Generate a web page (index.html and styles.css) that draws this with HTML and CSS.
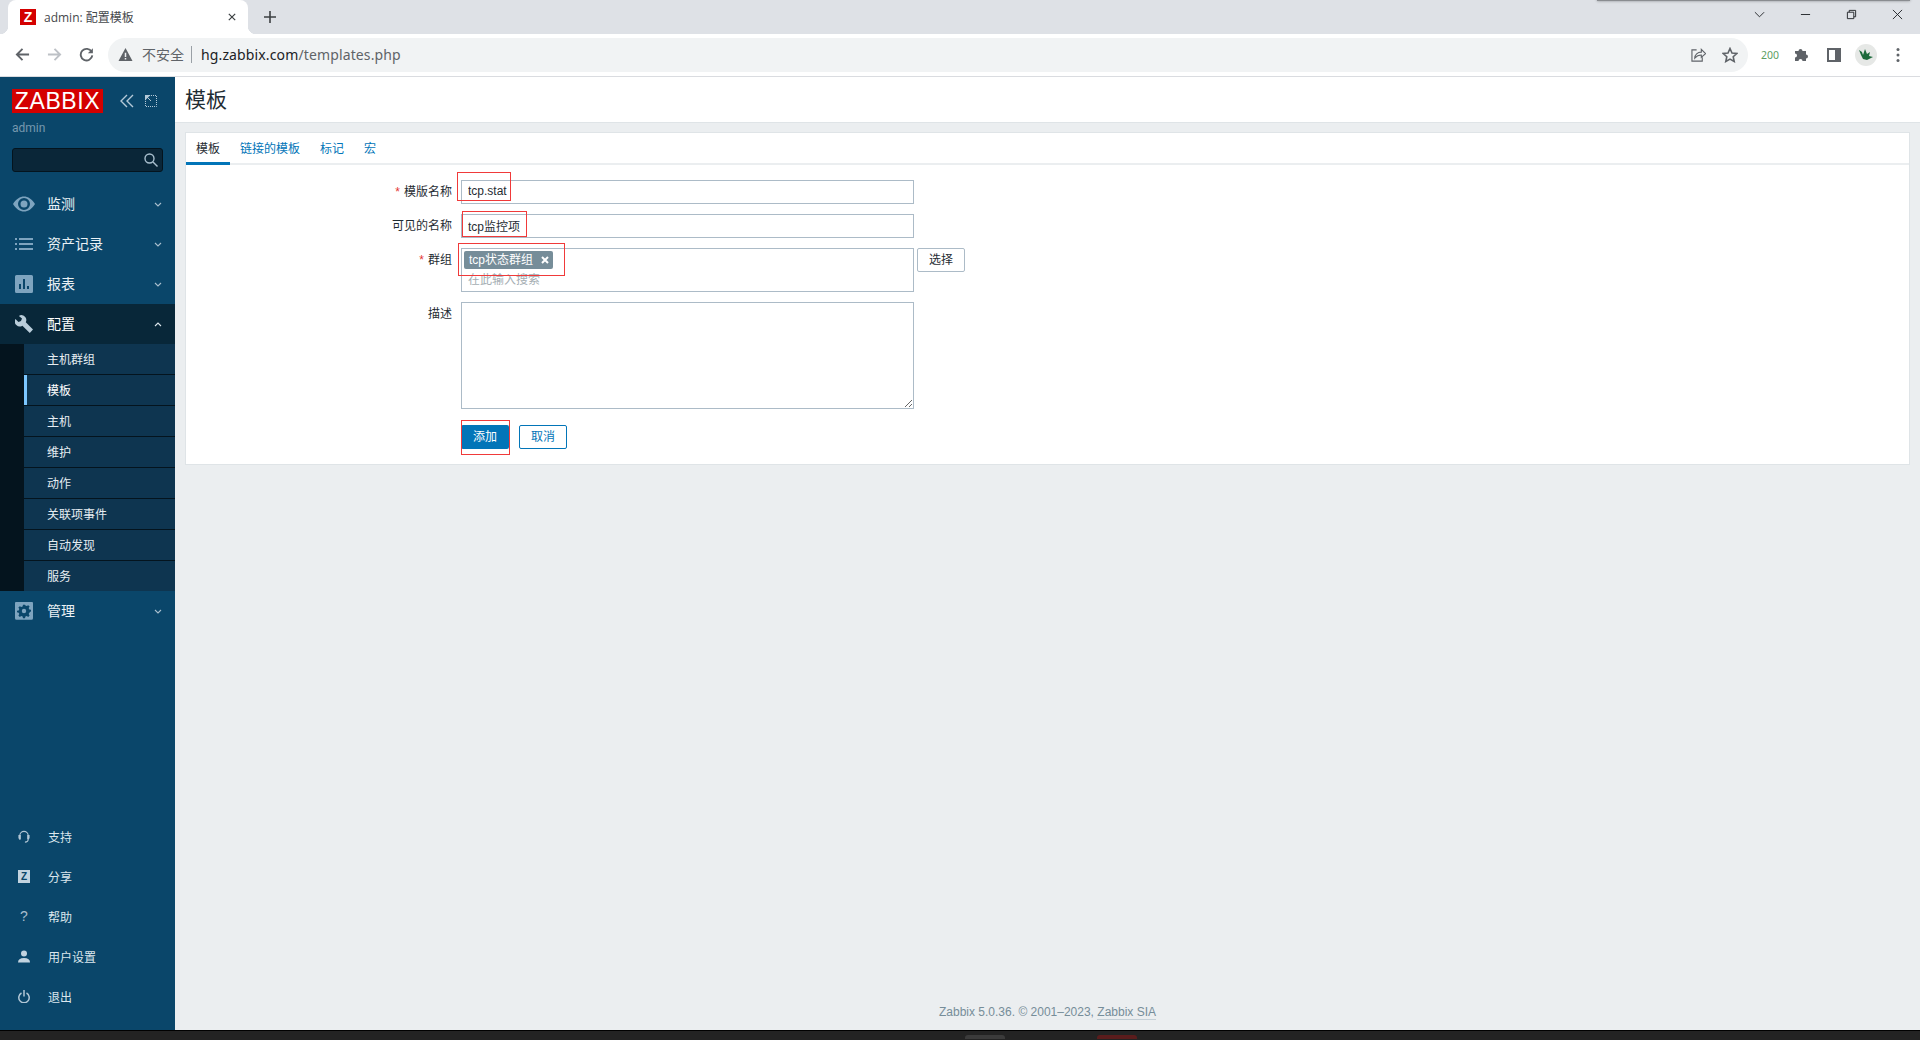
FILE: index.html
```html
<!DOCTYPE html>
<html lang="zh-CN">
<head>
<meta charset="utf-8">
<title>admin: 配置模板</title>
<link rel="stylesheet" href="styles.css">
</head>
<body>
<div class="tabstrip">
  <div class="browser-tab">
    <span class="favicon">Z</span>
    <span class="tab-title">admin: 配置模板</span>
    <svg class="tab-close" viewBox="0 0 10 10"><path d="M1 1l8 8M9 1l-8 8"/></svg>
  </div>
  <svg class="new-tab" viewBox="0 0 12 12"><path d="M6 0v12M0 6h12"/></svg>
  <div class="strip-shadow"></div>
  <div class="window-controls">
    <span class="win-btn"><svg viewBox="0 0 12 12"><path d="M1 3.500l5 5 5-5"/></svg></span>
    <span class="win-btn"><svg viewBox="0 0 12 12"><path d="M1 6h10"/></svg></span>
    <span class="win-btn"><svg viewBox="0 0 12 12"><path d="M1.500 3.500h7v7h-7zM3.500 3.500v-2h7v7h-2"/></svg></span>
    <span class="win-btn"><svg viewBox="0 0 12 12"><path d="M1 1l10 10M11 1L1 11"/></svg></span>
  </div>
</div>

<div class="toolbar">
  <span class="tool-btn"><svg viewBox="0 0 16 16" class="nav-ic"><path d="M15 8H2M8 2L2 8l6 6"/></svg></span>
  <span class="tool-btn"><svg viewBox="0 0 16 16" class="nav-ic nav-off"><path d="M1 8h13M8 2l6 6-6 6"/></svg></span>
  <span class="tool-btn"><svg viewBox="0 0 16 16" class="nav-ic"><path d="M13.500 5.200A6.200 6.200 0 1 0 14.200 9"/><path class="solid" d="M14.800 1.200v5.400H9.400z"/></svg></span>
  <div class="address">
    <svg class="warn" viewBox="0 0 16 16"><path d="M8 1L.5 15h15zM7.200 6h1.600v4.600H7.200zM7.200 11.600h1.600v1.600H7.200z" fill-rule="evenodd"/></svg>
    <span class="insecure">不安全</span>
    <span class="addr-sep"></span>
    <span class="url"><span class="url-host">hg.zabbix.com</span>/templates.php</span>
    <span class="addr-icons">
      <span class="tool-btn"><svg viewBox="0 0 16 16" class="line-ic"><path d="M6 3H1v12h11v-4"/><path d="M4 12c0-4 3-6.500 7-6.500V2.500L15.500 7 11 11V8.500c-3 0-5 1-7 3.500z"/></svg></span>
      <span class="tool-btn"><svg viewBox="0 0 16 16" class="line-ic star"><path d="M8 1.500l2 4.500 4.800.5-3.600 3.200 1 4.800L8 12.100l-4.200 2.400 1-4.800L1.200 6.500 6 6z"/></svg></span>
    </span>
  </div>
  <span class="tool-btn ext-count">200</span>
  <span class="tool-btn"><svg viewBox="0 0 16 16" class="solid-ic"><path d="M1 5h3.500a2 2 0 1 1 4 0H12v3.500a2 2 0 1 1 0 4V15H8.500a2 2 0 1 0-4 0H1v-3.500a2 2 0 1 0 0-4z" transform="translate(0 -1)"/></svg></span>
  <span class="tool-btn"><svg viewBox="0 0 16 16" class="solid-ic"><path d="M1 1h14v14H1zM3 3v10h6V3z" fill-rule="evenodd"/></svg></span>
  <span class="tool-btn"><svg viewBox="0 0 22 22" class="avatar"><circle cx="11" cy="11" r="11" fill="#e6e8e6"/><path d="M4 6l3 2 1 3 2-6 2 5 3-2-1 4 4 1-4 2-2 1-4-1-2-4z" fill="#1d6b3c"/></svg></span>
  <span class="tool-btn"><svg viewBox="0 0 4 16" class="dots"><circle cx="2" cy="2.500" r="1.500"/><circle cx="2" cy="8" r="1.500"/><circle cx="2" cy="13.500" r="1.500"/></svg></span>
</div>

<div class="app">
  <aside class="sidebar">
    <div class="brand">
      <span class="logo">ZABBIX</span>
      <svg class="collapse-ic" viewBox="0 0 14 14"><path d="M7 1L1 7l6 6M13 1L7 7l6 6"/></svg>
      <svg class="expand-ic" viewBox="0 0 12 12"><path class="dash" d="M.5 4v7.500H11.500V.5H4"/><path class="fill" d="M0 0h5.500L0 5.500z"/><path class="thin" d="M1 1l5 5"/></svg>
    </div>
    <div class="server-user">admin</div>
    <div class="search">
      <svg viewBox="0 0 14 14"><circle cx="5.500" cy="5.500" r="4.500"/><path d="M9 9l4.500 4.500"/></svg>
    </div>
    <nav class="menu">
      <a class="menu-item">
        <svg class="menu-ic eye-ic" viewBox="0 0 22 16"><path d="M0 8C3 3 7 .5 11 .5S19 3 22 8c-3 5-7 7.500-11 7.500S3 13 0 8zm11-6a6 6 0 1 0 0 12 6 6 0 0 0 0-12zm0 2.500a3.500 3.500 0 1 1 0 7 3.500 3.500 0 0 1 0-7z" fill-rule="evenodd"/></svg>
        <span>监测</span>
        <svg class="chev" viewBox="0 0 8 5"><path d="M1 1l3 3 3-3"/></svg>
      </a>
      <a class="menu-item">
        <svg class="menu-ic" viewBox="0 0 18 12"><path d="M0 0h2v2H0zM4 0h14v2H4zM0 5h2v2H0zM4 5h14v2H4zM0 10h2v2H0zM4 10h14v2H4z"/></svg>
        <span>资产记录</span>
        <svg class="chev" viewBox="0 0 8 5"><path d="M1 1l3 3 3-3"/></svg>
      </a>
      <a class="menu-item">
        <svg class="menu-ic" viewBox="0 0 18 18"><path d="M1.500 0h15A1.500 1.500 0 0 1 18 1.500v15a1.500 1.500 0 0 1-1.500 1.500h-15A1.500 1.500 0 0 1 0 16.500v-15A1.500 1.500 0 0 1 1.500 0zM4 9v5h2V9zm4-5v10h2V4zm4 7v3h2v-3z" fill-rule="evenodd"/></svg>
        <span>报表</span>
        <svg class="chev" viewBox="0 0 8 5"><path d="M1 1l3 3 3-3"/></svg>
      </a>
      <a class="menu-item is-open">
        <svg class="menu-ic" viewBox="0 0 18 18"><path d="M6.500 0a5 5 0 0 1 4.300 7.200L18 14.400 14.800 18l-7.400-7.300A5 5 0 0 1 .4 4l3.100 3.100L6 6 7 3.500 3.900.9A5 5 0 0 1 6.500 0z"/></svg>
        <span>配置</span>
        <svg class="chev" viewBox="0 0 8 5"><path d="M1 4l3-3 3 3"/></svg>
      </a>
      <div class="submenu">
        <a class="sub-item">主机群组</a>
        <a class="sub-item is-current">模板</a>
        <a class="sub-item">主机</a>
        <a class="sub-item">维护</a>
        <a class="sub-item">动作</a>
        <a class="sub-item">关联项事件</a>
        <a class="sub-item">自动发现</a>
        <a class="sub-item">服务</a>
      </div>
      <a class="menu-item">
        <svg class="menu-ic" viewBox="0 0 18 18"><path d="M1.500 0h15A1.500 1.500 0 0 1 18 1.500v15a1.500 1.500 0 0 1-1.500 1.500h-15A1.500 1.500 0 0 1 0 16.500v-15A1.500 1.500 0 0 1 1.500 0zM8 3l-.4 1.700-1.300.6-1.500-.9-1.400 1.400.9 1.500-.6 1.300L2 9l0 1.500 1.700.4.600 1.300-.9 1.500 1.400 1.400 1.500-.9 1.300.6.400 1.700H10l.4-1.700 1.300-.6 1.500.9 1.400-1.400-.9-1.500.6-1.300L16 9.500 16 8l-1.700-.4-.6-1.300.9-1.500-1.400-1.400-1.500.9-1.300-.6L10 3zm1 4a2.200 2.200 0 1 1 0 4.400A2.200 2.200 0 0 1 9 7z" fill-rule="evenodd" transform="translate(0 -.2)"/></svg>
        <span>管理</span>
        <svg class="chev" viewBox="0 0 8 5"><path d="M1 1l3 3 3-3"/></svg>
      </a>
    </nav>
    <nav class="user-menu">
      <a class="user-item">
        <svg class="user-ic" viewBox="0 0 12 14"><path d="M1.500 10.500V6a4.500 4.500 0 0 1 9 0v4.500M10.500 10c0 2-1.500 3-3.500 3"/><path class="solid" d="M0 6h2.500v4.500H1l-1-1zM12 6H9.500v4.500H11l1-1z" transform="translate(0 -.5)"/></svg>
        <span>支持</span>
      </a>
      <a class="user-item">
        <span class="share-z">Z</span>
        <span>分享</span>
      </a>
      <a class="user-item">
        <span class="help-q">?</span>
        <span>帮助</span>
      </a>
      <a class="user-item">
        <svg class="user-ic filled" viewBox="0 0 12 12"><circle cx="6" cy="3" r="3"/><path d="M0 12c0-3 2-4.500 6-4.500s6 1.500 6 4.500z"/></svg>
        <span>用户设置</span>
      </a>
      <a class="user-item">
        <svg class="user-ic" viewBox="0 0 12 13"><path d="M3.500 3a5.200 5.200 0 1 0 5 0M6 0v6.500" stroke-width="1.500"/></svg>
        <span>退出</span>
      </a>
    </nav>
  </aside>

  <main class="main">
    <header class="page-header"><h1>模板</h1></header>
    <section class="card">
      <div class="tabs">
        <a class="tab is-active">模板</a>
        <a class="tab">链接的模板</a>
        <a class="tab">标记</a>
        <a class="tab">宏</a>
      </div>
      <form class="form">
        <div class="form-row">
          <label class="form-label"><span class="req">*</span>模版名称</label>
          <div class="form-field">
            <input class="text-input" type="text" value="tcp.stat">
            <span class="mark mark-name"></span>
          </div>
        </div>
        <div class="form-row">
          <label class="form-label">可见的名称</label>
          <div class="form-field">
            <input class="text-input" type="text" value="tcp监控项">
            <span class="mark mark-visible"></span>
          </div>
        </div>
        <div class="form-row">
          <label class="form-label"><span class="req">*</span>群组</label>
          <div class="form-field field-group">
            <div class="multiselect">
              <span class="chip">tcp状态群组<svg viewBox="0 0 8 8"><path d="M1 1l6 6M7 1L1 7"/></svg></span>
              <span class="ms-placeholder">在此输入搜索</span>
            </div>
            <button class="btn-alt btn-select" type="button">选择</button>
            <span class="mark mark-group"></span>
          </div>
        </div>
        <div class="form-row">
          <label class="form-label">描述</label>
          <div class="form-field">
            <textarea class="text-area"></textarea>
          </div>
        </div>
        <div class="form-row form-actions">
          <span class="form-label"></span>
          <div class="form-field field-group">
            <button class="btn-primary" type="button">添加</button>
            <button class="btn-alt btn-cancel" type="button">取消</button>
            <span class="mark mark-add"></span>
          </div>
        </div>
      </form>
    </section>
    <footer class="page-footer">Zabbix 5.0.36. © 2001–2023, <a class="footer-link">Zabbix SIA</a></footer>
  </main>
</div>

<div class="taskbar">
  <span class="task task-gray"></span>
  <span class="task task-red"></span>
</div>
</body>
</html>
```

FILE: styles.css
```css
* { box-sizing: border-box; }
html, body { height: 100%; }
body {
  margin: 0;
  display: flex;
  flex-direction: column;
  height: 1040px;
  overflow: hidden;
  font-family: "Liberation Sans", "Noto Sans CJK SC", sans-serif;
  font-size: 12px;
  color: #1f2c33;
  background: #ebeef0;
}
a { text-decoration: none; color: inherit; }

/* browser chrome */
.tabstrip {
  position: relative;
  display: flex;
  align-items: flex-start;
  height: 34px;
  flex: none;
  background: #dee1e6;
  padding-left: 8px;
}
.browser-tab {
  position: relative;
  display: flex;
  align-items: center;
  width: 240px;
  height: 34px;
  background: #fff;
  border-radius: 8px 8px 0 0;
  padding: 0 10px 0 12px;
}
.browser-tab::before,
.browser-tab::after {
  content: "";
  position: absolute;
  bottom: 0;
  width: 8px;
  height: 8px;
}
.browser-tab::before { left: -8px; background: radial-gradient(circle at 0 0, transparent 8px, #fff 8.500px); }
.browser-tab::after { right: -8px; background: radial-gradient(circle at 100% 0, transparent 8px, #fff 8.500px); }
.favicon {
  width: 16px;
  height: 16px;
  background: #d40000;
  color: #fff;
  font: bold 14px/16px "Liberation Sans", sans-serif;
  text-align: center;
  flex: none;
}
.tab-title {
  margin-left: 8px;
  flex: 1;
  font-size: 12px;
  line-height: 16px;
  padding-top: 2px;
  color: #45484c;
  font-family: "Open Sans", "Noto Sans CJK SC", sans-serif;
}
.tab-close { width: 8px; height: 8px; fill: none; stroke: #3c4043; stroke-width: 1.500; margin-right: 2px; }
.new-tab { width: 12px; height: 12px; margin: 11px 0 0 16px; fill: none; stroke: #3c4043; stroke-width: 1.600; }
.strip-shadow {
  position: absolute;
  left: 1597px;
  top: -2px;
  width: 313px;
  height: 3px;
  background: #8a8d91;
  box-shadow: 0 0 3px #8a8d91;
}
.window-controls { display: flex; margin-left: auto; height: 28px; }
.win-btn { width: 46px; height: 28px; display: flex; align-items: center; justify-content: center; }
.win-btn svg { width: 11px; height: 11px; fill: none; stroke: #1f2226; stroke-width: 1; }

.toolbar {
  display: flex;
  align-items: center;
  height: 43px;
  flex: none;
  padding: 0 6px 1px;
  background: #fff;
  border-bottom: 1px solid #dadce0;
}
.tool-btn {
  width: 32px;
  height: 32px;
  flex: none;
  display: flex;
  align-items: center;
  justify-content: center;
}
.nav-ic { width: 15px; height: 15px; fill: none; stroke: #5f6368; stroke-width: 2; }
.nav-ic .solid { fill: #5f6368; stroke: none; }
.nav-off { stroke: #bdc1c6; }
.address {
  flex: 1;
  height: 34px;
  margin: 0 6px;
  padding: 0 2px 0 10px;
  display: flex;
  align-items: center;
  background: #f1f3f4;
  border-radius: 17px;
}
.warn { width: 15px; height: 15px; fill: #5f6368; }
.insecure {
  margin-left: 9px;
  font-size: 14px;
  color: #5f6368;
  line-height: 20px;
}
.addr-sep { width: 1px; height: 17px; background: #9aa0a6; margin: 0 9px 0 7px; }
.url {
  font-family: "Noto Sans", sans-serif;
  font-size: 14px;
  line-height: 20px;
  letter-spacing: .13px;
  color: #5f6368;
}
.url-host { color: #202124; }
.addr-icons { display: flex; margin-left: auto; }
.line-ic { width: 15px; height: 15px; fill: none; stroke: #5f6368; stroke-width: 1.200; }
.star { stroke-width: 1.600; width: 16px; height: 16px; }
.ext-count { font-family: "Noto Sans", sans-serif; font-size: 10.500px; color: #5d9e62; }
.solid-ic { width: 16px; height: 16px; fill: #5f6368; }
.avatar { width: 22px; height: 22px; }
.dots { width: 4px; height: 16px; fill: #5f6368; }

/* app */
.app { flex: 1; display: flex; min-height: 0; }
.sidebar {
  width: 175px;
  flex: none;
  display: flex;
  flex-direction: column;
  padding-top: 12px;
  background: #0a466a;
  color: #fff;
}
.brand { display: flex; align-items: center; padding-left: 12px; height: 24px; }
.logo {
  width: 91px;
  height: 24px;
  background: #d40000;
  color: #fff;
  font-size: 23px;
  line-height: 25px;
  text-align: center;
  letter-spacing: .6px;
}
.collapse-ic { width: 14px; height: 14px; margin-left: 17px; fill: none; stroke: #b4c9d8; stroke-width: 1.400; }
.expand-ic { width: 12px; height: 12px; margin-left: 11px; fill: none; }
.expand-ic .dash { stroke: #b4c9d8; stroke-width: 1; stroke-dasharray: 1 1; }
.expand-ic .fill { fill: #b4c9d8; }
.expand-ic .thin { stroke: #b4c9d8; stroke-width: 1; }
.server-user {
  margin: 8px 0 0 12px;
  line-height: 14px;
  color: #7698ae;
  font-size: 12px;
  height: 14px;
  font-family: "Roboto", sans-serif;
}
.search {
  width: 151px;
  height: 24px;
  margin: 13px 0 12px 12px;
  background: #0a2638;
  border: 1px solid #04141e;
  border-radius: 3px;
  display: flex;
  align-items: center;
  justify-content: flex-end;
  padding-right: 4px;
}
.search svg { width: 14px; height: 14px; fill: none; stroke: #a9bfce; stroke-width: 1.400; }
.menu { display: flex; flex-direction: column; }
.menu-item {
  height: 40px;
  display: flex;
  align-items: center;
  font-size: 14px;
  line-height: 20px;
  color: #eaf1f5;
  position: relative;
}
.menu-item.is-open { background: #082739; color: #fff; }
.menu-ic { position: absolute; left: 15px; top: 50%; width: 18px; height: 18px; margin-top: -9px; fill: #7ea4bf; }
.menu-ic.eye-ic { left: 13px; width: 22px; height: 16px; margin-top: -8px; }
.menu-item.is-open .menu-ic { fill: #b9cdda; }
.menu-item span { margin-left: 47px; }
.chev { position: absolute; left: 154px; top: 18px; width: 8px; height: 5px; fill: none; stroke: #a9bfce; stroke-width: 1.100; }
.is-open .chev { stroke: #dce6ec; }
.submenu {
  display: flex;
  flex-direction: column;
  background: #04141e;
  padding-left: 24px;
  height: 247px;
}
.sub-item {
  height: 31px;
  flex: none;
  background: #0e3550;
  border-bottom: 1px solid #04141e;
  padding-left: 23px;
  line-height: 32px;
  color: #e6edf2;
  font-size: 12px;
}
.sub-item:last-child { border-bottom: 0; height: 30px; }
.sub-item.is-current { box-shadow: inset 3px 0 0 #7cc7ff; color: #fff; }
.user-menu { margin-top: auto; padding-bottom: 14px; display: flex; flex-direction: column; }
.user-item {
  height: 40px;
  display: flex;
  align-items: center;
  color: #dbe6ed;
  font-size: 12px;
}
.user-item > span:last-child { margin-left: 18px; }
.user-item > :first-child { width: 12px; height: 13px; flex: none; margin-left: 18px; }
.user-ic { fill: none; stroke: #b2c7d6; stroke-width: 1.200; }
.user-ic .solid { fill: #b2c7d6; stroke: none; }
.user-ic.filled { fill: #c2d3df; stroke: none; }
.share-z {
  background: #c2d3df;
  color: #0a466a;
  font: bold 10px/13px "Liberation Sans", sans-serif;
  text-align: center;
}
.help-q { color: #a9bfce; font: 14px/13px "Liberation Sans", sans-serif; text-align: center; }

/* main */
.main { flex: 1; min-width: 0; display: flex; flex-direction: column; padding-bottom: 12px; }
.page-header {
  height: 46px;
  flex: none;
  background: #fff;
  border-bottom: 1px solid #dfe4e7;
  padding-left: 10px;
}
.page-header h1 { margin: 0; font-size: 21px; font-weight: 400; line-height: 45px; }
.card {
  margin: 10px 11px 0 11px;
  height: 331px;
  flex: none;
  background: #fff;
  box-shadow: 0 0 0 1px #dfe4e7;
}
.tabs {
  display: flex;
  height: 32px;
  border-bottom: 2px solid #ebeef0;
}
.tab {
  padding: 0 10px;
  height: 32px;
  line-height: 33px;
  color: #0275b8;
  font-size: 12px;
}
.tab.is-active { color: #1f2c33; border-bottom: 3px solid #0275b8; }
.form { display: flex; flex-direction: column; gap: 10px; padding-top: 15px; }
.form-row { display: flex; }
.form-actions { margin-top: 6px; }
.form-label {
  width: 266px;
  flex: none;
  text-align: right;
  line-height: 24px;
  color: #1f2c33;
  font-size: 12px;
}
.req { color: #e33734; margin-right: 4px; }
.form-field { position: relative; margin-left: 9px; }
.field-group { display: flex; gap: 3px; align-items: flex-start; }
.text-input {
  display: block;
  width: 453px;
  height: 24px;
  border: 1px solid #acbbc7;
  padding: 0 5px 2px 6px;
  font: 12px/20px "Liberation Sans", "Noto Sans CJK SC", sans-serif;
  color: #1f2c33;
  background: #fff;
  outline: none;
  border-radius: 0;
}
.multiselect {
  width: 453px;
  height: 44px;
  border: 1px solid #acbbc7;
  padding: 2px 2px 0;
  display: flex;
  flex-direction: column;
  align-items: flex-start;
}
.chip {
  height: 18px;
  width: 89px;
  background: #768d99;
  color: #fff;
  border-radius: 2px;
  padding-left: 5px;
  display: flex;
  align-items: center;
  font-size: 12px;
  line-height: 18px;
}
.chip svg { width: 8px; height: 8px; margin-left: 8px; fill: none; stroke: #fff; stroke-width: 2; }
.ms-placeholder { margin: 1px 0 0 4px; line-height: 20px; color: #a5aeb3; }
.text-area {
  display: block;
  width: 453px;
  height: 107px;
  border: 1px solid #acbbc7;
  background: #fff;
  padding: 5px;
  outline: none;
  margin: 0;
  border-radius: 0;
}
.btn-alt {
  height: 24px;
  background: #fff;
  border-radius: 2px;
  font: 12px/22px "Liberation Sans", "Noto Sans CJK SC", sans-serif;
  padding: 0;
}
.btn-select { width: 48px; border: 1px solid #acbbc7; color: #1f2c33; }
.btn-cancel { width: 48px; border: 1px solid #0275b8; color: #0275b8; margin-left: 7px; }
.btn-primary {
  width: 48px;
  height: 24px;
  background: #0275b8;
  border: 0;
  border-radius: 2px;
  color: #fff;
  padding: 0;
  font: 12px/24px "Liberation Sans", "Noto Sans CJK SC", sans-serif;
}
.mark { position: absolute; border: 1px solid #f03a3a; pointer-events: none; }
.mark-name { left: -4px; top: -8px; width: 54px; height: 29px; }
.mark-visible { left: 1px; top: -3px; width: 65px; height: 26px; }
.mark-group { left: -3px; top: -5px; width: 107px; height: 33px; }
.mark-add { left: 0; top: -5px; width: 49px; height: 35px; }

.page-footer {
  margin-top: auto;
  text-align: center;
  color: #768d99;
  font-size: 12px;
  line-height: 16px;
  padding-bottom: 0;
  height: 14px;
}
.footer-link { border-bottom: 1px solid #c5d0d7; }

.taskbar {
  height: 10px;
  flex: none;
  display: flex;
  background: #232323;
  border-top: 1px solid #000;
  padding-left: 965px;
}
.task { width: 40px; height: 4px; margin-top: 4px; border-radius: 3px 3px 0 0; }
.task-gray { background: #3b3b3b; }
.task-red { background: #5a1c1c; margin-left: 92px; }
```
